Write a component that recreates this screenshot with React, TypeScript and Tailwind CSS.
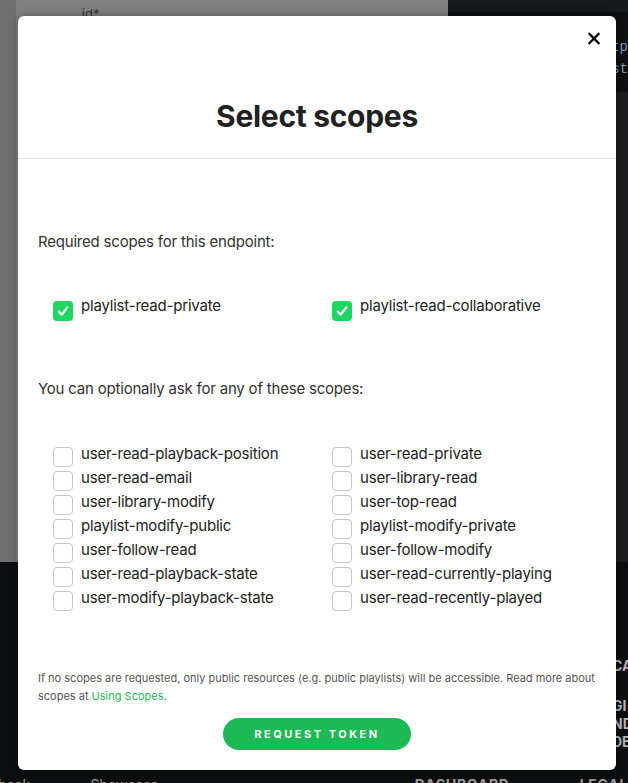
import React from "react";

const left = [
  "user-read-playback-position",
  "user-read-email",
  "user-library-modify",
  "playlist-modify-public",
  "user-follow-read",
  "user-read-playback-state",
  "user-modify-playback-state",
];
const right = [
  "user-read-private",
  "user-library-read",
  "user-top-read",
  "playlist-modify-private",
  "user-follow-modify",
  "user-read-currently-playing",
  "user-read-recently-played",
];

function Checked({ label }: { label: string }) {
  return (
    <div className="flex h-6 items-start gap-2">
      <div className="mt-[7px] flex h-5 w-5 shrink-0 items-center justify-center rounded-[4px] bg-[#1ed760]">
        <svg width="14" height="14" viewBox="0 0 14 14" fill="none">
          <path d="M2.8 7.6 L5.8 10.6 L11.3 3.4" stroke="white" strokeWidth="2.2" strokeLinecap="round" strokeLinejoin="round" />
        </svg>
      </div>
      <span className="leading-6">{label}</span>
    </div>
  );
}

function Unchecked({ label }: { label: string }) {
  return (
    <div className="flex h-6 items-start gap-2">
      <div className="mt-[5px] h-5 w-5 shrink-0 rounded-[4px] border border-[#c6c6c6] bg-white" />
      <span className="leading-6">{label}</span>
    </div>
  );
}

export default function App() {
  return (
    <div className="relative h-[783px] w-[628px] overflow-hidden bg-[#0d0e10]" style={{ fontFamily: "Inter, 'Noto Sans', sans-serif" }}>
      {/* background page */}
      <div className="flex h-[562px]">
        <div className="w-4 bg-[#6f6f6f]" />
        <div className="relative w-[436px] bg-[#808080]">
          <span className="absolute left-[66px] top-[5px] text-[13px] text-[#333]">id*</span>
        </div>
        <div className="flex flex-1 flex-col">
          <div className="h-3 bg-[#17191b]" />
          <div className="flex h-[80px] flex-col bg-[#0d0f11] pl-[163px] pt-[24px] text-[14px] leading-[22px] text-[#8b9aab]" style={{ fontFamily: "'Liberation Mono', monospace" }}>
            <span><span className="text-[#b98a5a]">t</span><span className="text-[#6f9ccf]">p</span></span>
            <span>st</span>
          </div>
          <div className="flex-1 bg-[#1b1d1f]" />
        </div>
      </div>
      <div className="relative h-[221px]">
        <div className="absolute left-[612px] top-[96px] text-[14px] font-bold leading-4 text-[#b5b5b5]">CA</div>
        <div className="absolute left-[612px] top-[135px] flex flex-col text-[14px] font-bold leading-[18px] text-[#b5b5b5]">
          <span>GI</span>
          <span>ND</span>
          <span>DE</span>
        </div>
        <div className="absolute left-[-30px] top-[212px] flex text-[14px] text-[#9a9a9a]">
          <span>Playback SDK</span>
          <span className="ml-[38px]">Showcase</span>
          <span className="ml-[256px] font-bold tracking-wider">DASHBOARD</span>
          <span className="ml-[70px] font-bold tracking-wider">LEGAL</span>
        </div>
      </div>

      {/* modal */}
      <div className="absolute left-[18px] top-4 flex h-[754px] w-[598px] flex-col rounded-md bg-white shadow-[0_0_8px_rgba(0,0,0,0.35)]">
        <button className="absolute right-4 top-4 flex h-3 w-3 items-center justify-center">
          <svg width="13" height="13" viewBox="0 0 13 13">
            <path d="M1.5 1.5 L11.5 11.5 M11.5 1.5 L1.5 11.5" stroke="#000" strokeWidth="2.4" strokeLinecap="square" />
          </svg>
        </button>
        <div className="border-b border-[#e6e6e6] pb-[24px] pt-[82px] text-center">
          <h1 className="text-[30px] font-bold leading-9 tracking-[-0.3px] text-[#212121]">Select scopes</h1>
        </div>
        <div className="flex flex-1 flex-col px-5 text-[15px] tracking-[-0.2px] text-[#333]">
          <p className="mt-[71px] leading-6">Required scopes for this endpoint:</p>
          <div className="mt-10 grid grid-cols-[279px_1fr] pl-[15px] text-[#222]">
            <Checked label="playlist-read-private" />
            <Checked label="playlist-read-collaborative" />
          </div>
          <p className="mt-[59px] leading-6">You can optionally ask for any of these scopes:</p>
          <div className="mt-[41px] grid grid-cols-[279px_1fr] pl-[15px] text-[#222]">
            <div className="flex flex-col">
              {left.map((s) => (
                <Unchecked key={s} label={s} />
              ))}
            </div>
            <div className="flex flex-col">
              {right.map((s) => (
                <Unchecked key={s} label={s} />
              ))}
            </div>
          </div>
          <p className="mt-[59px] text-[11px] leading-[18px] tracking-normal text-[#555]">
            If no scopes are requested, only public resources (e.g. public playlists) will be accessible. Read more about scopes at{" "}
            <span className="text-[#1db954]">Using Scopes</span>.
          </p>
          <div className="mt-[13px] flex justify-center">
            <button className="h-8 w-[188px] rounded-full bg-[#1db954] text-[11px] font-bold tracking-[2.5px] text-white">
              REQUEST TOKEN
            </button>
          </div>
        </div>
      </div>
    </div>
  );
}
